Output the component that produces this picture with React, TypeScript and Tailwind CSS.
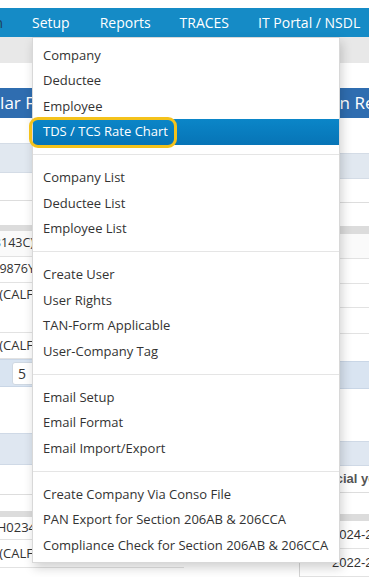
import React from 'react';

const groups: string[][] = [
  ['Company', 'Deductee', 'Employee', 'TDS / TCS Rate Chart'],
  ['Company List', 'Deductee List', 'Employee List'],
  ['Create User', 'User Rights', 'TAN-Form Applicable', 'User-Company Tag'],
  ['Email Setup', 'Email Format', 'Email Import/Export'],
  ['Create Company Via Conso File', 'PAN Export for Section 206AB & 206CCA', 'Compliance Check for Section 206AB & 206CCA'],
];

const active = 'TDS / TCS Rate Chart';

// text cut on the left edge of the window
function LeftCell({ text, className = 'w-[33px]' }: { text: string; className?: string }) {
  return (
    <div className={`shrink-0 overflow-hidden flex justify-end whitespace-nowrap ${className}`}>
      <span className="shrink-0">{text}</span>
    </div>
  );
}

function LeftPanel() {
  return (
    <div className="w-[184px] shrink-0 flex flex-col text-[13px] text-[#333]">
      <div className="h-[30px] bg-[#2f6db0] text-white text-[17px] flex items-center">
        <LeftCell text="Regular F" className="w-[34px]" />
      </div>
      <div className="h-[25px]" />
      <div className="h-[30px] bg-[#e1e8f0] border-y border-[#d4dce6]" />
      <div className="h-[28px] border-b border-[#dddddd]" />
      <div className="h-[24px]" />
      <div className="h-[6px] bg-[#dcdcdc]" />
      <div className="h-[26px] flex items-center border-b border-[#e2e2e2] bg-[#fafafa] text-[12.5px]">
        <LeftCell text="AAAPL8143C)" className="w-[34px]" />
      </div>
      <div className="h-[26px] flex items-center border-b border-[#e2e2e2] text-[12.5px]">
        <LeftCell text="AACFA09876Y" className="w-[35px]" />
      </div>
      <div className="h-[24px] flex items-center">
        <LeftCell text="Ltd. (CALF" />
      </div>
      <div className="h-[26px] border-b border-[#e2e2e2]" />
      <div className="h-[26px] flex items-center border-b border-[#e2e2e2]">
        <LeftCell text="Ltd. (CALF" />
      </div>
      <div className="h-[28px] bg-[#d9e4f1] border-y border-[#c9d6e6] flex items-center">
        <div className="ml-[12px] w-[26px] h-[23px] bg-white border border-[#cfd8e2] rounded-[3px] flex items-center pl-[5px] text-[14px]">
          5
        </div>
      </div>
      <div className="h-[46px]" />
      <div className="h-[32px] bg-[#dfe7f1] border-y border-[#cfd9e6]" />
      <div className="h-[30px] border-b border-[#dddddd]" />
      <div className="h-[16px]" />
      <div className="h-[6px] bg-[#dcdcdc]" />
      <div className="h-[23px] flex items-center border-b border-[#e2e2e2]">
        <LeftCell text="AAAH0234" className="w-[36px]" />
      </div>
      <div className="h-[28px] flex items-center border-b border-[#e2e2e2]">
        <LeftCell text="Ltd. (CALF" />
      </div>
    </div>
  );
}

function RightPanel() {
  return (
    <div className="flex-1 min-w-0 flex flex-col text-[13px] text-[#333]">
      <div className="h-[30px] bg-[#2f6db0] text-white text-[17px] flex items-center whitespace-nowrap overflow-hidden">
        <span className="shrink-0 pl-[107px]">Challan Register</span>
      </div>
      <div className="h-[35px]" />
      <div className="h-[26px] bg-[#e1e8f0] border-y border-[#d4dce6]" />
      <div className="h-[24px] border-b border-[#dddddd]" />
      <div className="h-[23px]" />
      <div className="h-[8px] bg-[#dcdcdc]" />
      <div className="h-[25px] border-b border-[#e2e2e2] bg-[#fafafa]" />
      <div className="h-[25px] border-b border-[#e2e2e2]" />
      <div className="h-[24px] border-b border-[#e2e2e2]" />
      <div className="h-[26px] border-b border-[#e2e2e2]" />
      <div className="h-[27px]" />
      <div className="h-[28px] bg-[#d9e4f1] border-y border-[#c9d6e6]" />
      <div className="h-[52px]" />
      <div className="h-[25px] bg-[#dfe7f1] border-y border-[#cfd9e6]" />
      <div className="h-[27px] flex items-center border-b border-[#dddddd] font-['Liberation_Sans',sans-serif] font-bold text-[#555] whitespace-nowrap overflow-hidden">
        <span className="shrink-0 pl-[117px]">Financial year</span>
      </div>
      <div className="h-[21px]" />
      <div className="h-[7px] bg-[#dcdcdc]" />
      <div className="flex">
        <div className="w-[116px] shrink-0 border-r border-[#d6d6d6]" />
        <div className="flex-1 min-w-0 flex flex-col font-['Liberation_Sans',sans-serif]">
          <div className="h-[28px] flex items-center border-b border-[#e2e2e2] whitespace-nowrap overflow-hidden">
            <span className="shrink-0 pl-[32px]">2024-25</span>
          </div>
          <div className="h-[28px] flex items-center border-b border-[#e2e2e2] whitespace-nowrap overflow-hidden">
            <span className="shrink-0 pl-[32px]">2022-23</span>
          </div>
        </div>
      </div>
    </div>
  );
}

function SetupMenu() {
  return (
    <div className="absolute left-[32px] top-[37px] w-[308px] bg-white border border-[#d8d8d8] shadow-[2px_5px_10px_rgba(0,0,0,0.18)] pt-[4.5px] pb-[4px] text-[13px] text-[#333]">
      {groups.map((items, gi) => (
        <div key={gi}>
          {gi > 0 && <div className="h-px bg-[#e5e5e5] my-[9.75px]" />}
          {items.map((label) => (
            <div
              key={label}
              className={
                label === active
                  ? 'h-[25.5px] flex items-center pl-[10px] whitespace-nowrap text-white bg-gradient-to-b from-[#0b86c8] to-[#0774b6]'
                  : 'h-[25.5px] flex items-center pl-[10px] whitespace-nowrap'
              }
            >
              {label}
            </div>
          ))}
        </div>
      ))}
      <div className="absolute left-[-4px] top-[79px] w-[148px] h-[31px] border-[3px] border-[#f4c21b] rounded-[9px] pointer-events-none" />
    </div>
  );
}

export default function App() {
  return (
    <div className="relative w-full h-[577px] overflow-hidden bg-white font-['Open_Sans',sans-serif]">
      <div className="h-[8px] bg-white" />
      <div className="h-[29px] bg-[#158bc6] flex items-center text-white text-[14px] whitespace-nowrap overflow-hidden">
        <div className="w-[17px] shrink-0 overflow-hidden flex justify-end">
          <span className="shrink-0 pr-[14px] text-[#1d3f5a]">Transaction</span>
        </div>
        <span className="shrink-0 px-[15px]">Setup</span>
        <span className="shrink-0 px-[15px]">Reports</span>
        <span className="shrink-0 px-[14px]">TRACES</span>
        <span className="shrink-0 px-[15px]">IT Portal / NSDL</span>
      </div>
      <div className="h-[26px] bg-[#e8e8e8]" />
      <div className="h-[25px]" />
      <div className="flex">
        <LeftPanel />
        <RightPanel />
      </div>
      <SetupMenu />
    </div>
  );
}
